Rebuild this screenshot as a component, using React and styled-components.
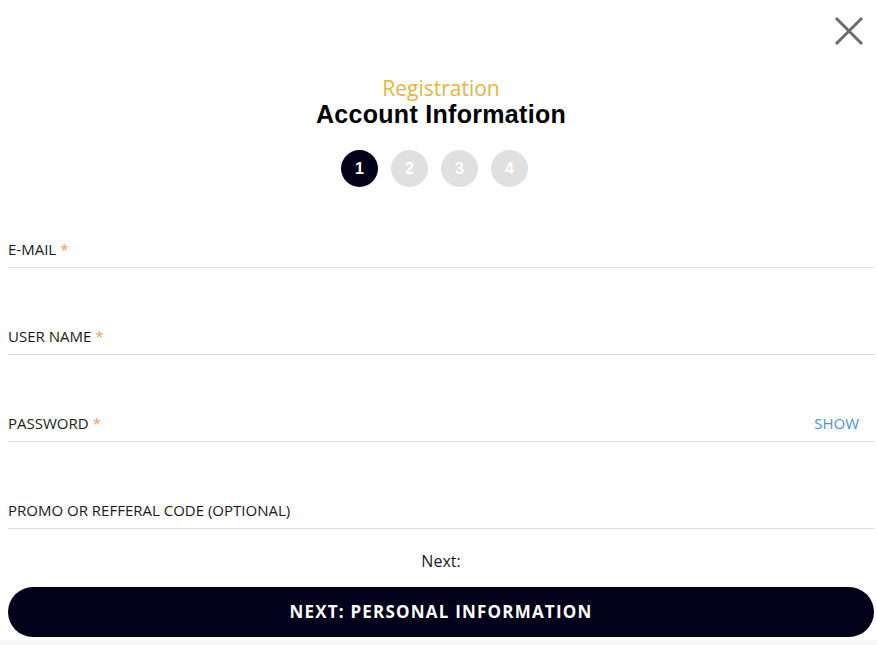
import React from 'react';
import styled, { createGlobalStyle } from 'styled-components';

const GlobalStyle = createGlobalStyle`
  html, body {
    margin: 0;
    padding: 0;
    background: #f6f6f6;
  }
  * {
    box-sizing: border-box;
  }
`;

const Modal = styled.div`
  position: relative;
  background: #fff;
  padding: 76px 3px 3px 8px;
  font-family: "Open Sans", "Liberation Sans", sans-serif;
  color: #1a1a1a;
`;

const CloseButton = styled.button`
  position: absolute;
  top: 16px;
  right: 13px;
  width: 30px;
  height: 30px;
  padding: 0;
  border: none;
  background: none;
  cursor: pointer;
`;

const Header = styled.div`
  display: flex;
  flex-direction: column;
  align-items: center;
`;

const Kicker = styled.div`
  font-size: 21px;
  font-weight: 500;
  line-height: 25px;
  color: #e8b43c;
`;

const Title = styled.h1`
  margin: 0;
  font-family: "Liberation Sans", Arial, sans-serif;
  font-weight: 700;
  font-size: 25px;
  line-height: 26px;
  letter-spacing: 0.3px;
  color: #000;
`;

const Steps = styled.div`
  display: flex;
  margin-top: 23px;
`;

const Step = styled.div`
  width: 37px;
  height: 37px;
  margin-right: 13px;
  border-radius: 50%;
  display: flex;
  align-items: center;
  justify-content: center;
  background: ${p => (p.$active ? '#03001a' : '#e0e0e0')};
  color: #fff;
  font-family: "Liberation Sans", Arial, sans-serif;
  font-weight: 700;
  font-size: 16px;
`;

const Form = styled.div`
  display: flex;
  flex-direction: column;
`;

const Field = styled.div`
  display: flex;
  align-items: center;
  justify-content: space-between;
  margin-top: ${p => p.$first ? '52px' : '58px'};
  padding: 0 15px 8px 0;
  border-bottom: 1px solid #dddddd;
`;

const Label = styled.label`
  font-size: 15px;
  line-height: 20px;
  color: #1a1a1a;
`;

const Required = styled.span`
  color: #f0a05a;
  margin-left: 4px;
`;

const ShowToggle = styled.span`
  font-size: 15px;
  line-height: 20px;
  color: #4a90e2;
  cursor: pointer;
`;

const NextHint = styled.div`
  text-align: center;
  font-size: 16px;
  line-height: 22px;
  margin-top: 21px;
  color: #1a1a1a;
`;

const SubmitButton = styled.button`
  display: block;
  width: 100%;
  height: 50px;
  margin-top: 15px;
  padding-bottom: 2px;
  border: none;
  border-radius: 25px;
  background: #02001a;
  color: #fff;
  font-family: "Open Sans", "Liberation Sans", sans-serif;
  font-weight: 700;
  font-size: 17px;
  letter-spacing: 1.2px;
  cursor: pointer;
`;

const fields = [
  { label: 'E-MAIL', required: true },
  { label: 'USER NAME', required: true },
  { label: 'PASSWORD', required: true, toggle: true },
  { label: 'PROMO OR REFFERAL CODE (OPTIONAL)' },
];

const App = () => (
  <>
    <GlobalStyle />
    <Modal>
      <CloseButton aria-label="Close">
        <svg width="30" height="30" viewBox="0 0 30 30">
          <path d="M2 2 L28 28 M28 2 L2 28" stroke="#6b6b6b" strokeWidth="3" />
        </svg>
      </CloseButton>
      <Header>
        <Kicker>Registration</Kicker>
        <Title>Account Information</Title>
        <Steps>
          {[1, 2, 3, 4].map(n => (
            <Step key={n} $active={n === 1}>{n}</Step>
          ))}
        </Steps>
      </Header>
      <Form>
        {fields.map((f, i) => (
          <Field key={f.label} $first={i === 0}>
            <Label>
              {f.label}
              {f.required && <Required>*</Required>}
            </Label>
            {f.toggle && <ShowToggle>SHOW</ShowToggle>}
          </Field>
        ))}
      </Form>
      <NextHint>Next:</NextHint>
      <SubmitButton>NEXT: PERSONAL INFORMATION</SubmitButton>
    </Modal>
  </>
);

export default App;
